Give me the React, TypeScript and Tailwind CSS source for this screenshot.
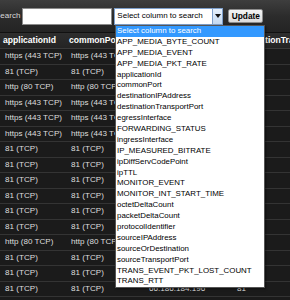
import React from 'react';

const columns = ['applicationId', 'commonPort', 'destinationIPAddress', 'destinationTransportPort'];

const rows: string[][] = [
  ['https (443 TCP)', 'https (443 TCP)', '74.125.224.18', '443'],
  ['81 (TCP)', '81 (TCP)', '66.186.184.196', '81'],
  ['http (80 TCP)', 'http (80 TCP)', '72.21.91.19', '80'],
  ['https (443 TCP)', 'https (443 TCP)', '74.125.224.18', '443'],
  ['https (443 TCP)', 'https (443 TCP)', '74.125.224.18', '443'],
  ['https (443 TCP)', 'https (443 TCP)', '74.125.224.18', '443'],
  ['81 (TCP)', '81 (TCP)', '66.186.184.196', '81'],
  ['81 (TCP)', '81 (TCP)', '66.186.184.196', '81'],
  ['81 (TCP)', '81 (TCP)', '66.186.184.196', '81'],
  ['81 (TCP)', '81 (TCP)', '66.186.184.196', '81'],
  ['81 (TCP)', '81 (TCP)', '66.186.184.196', '81'],
  ['81 (TCP)', '81 (TCP)', '66.186.184.196', '81'],
  ['http (80 TCP)', 'http (80 TCP)', '72.21.91.19', '80'],
  ['81 (TCP)', '81 (TCP)', '66.186.184.196', '81'],
  ['81 (TCP)', '81 (TCP)', '66.186.184.196', '81'],
  ['81 (TCP)', '81 (TCP)', '66.186.184.196', '81'],
];

const options = [
  'Select column to search',
  'APP_MEDIA_BYTE_COUNT',
  'APP_MEDIA_EVENT',
  'APP_MEDIA_PKT_RATE',
  'applicationId',
  'commonPort',
  'destinationIPAddress',
  'destinationTransportPort',
  'egressInterface',
  'FORWARDING_STATUS',
  'ingressInterface',
  'IP_MEASURED_BITRATE',
  'ipDiffServCodePoint',
  'ipTTL',
  'MONITOR_EVENT',
  'MONITOR_INT_START_TIME',
  'octetDeltaCount',
  'packetDeltaCount',
  'protocolIdentifier',
  'sourceIPAddress',
  'sourceOrDestination',
  'sourceTransportPort',
  'TRANS_EVENT_PKT_LOST_COUNT',
  'TRANS_RTT',
];

const widths = ['w-[66px]', 'w-[78px]', 'w-[88px]', 'w-[80px]'];

export default function App() {
  return (
    <div
      className="relative w-[290px] h-[300px] overflow-hidden bg-[#1b1b1b]"
      style={{ fontFamily: '"Liberation Sans", Arial, sans-serif' }}
    >
      {/* search bar */}
      <div className="flex items-center h-[33px] bg-gradient-to-b from-[#3e3e3e] via-[#2c2c2c] to-[#242424] border-b border-[#111]">
        <span className="ml-[-5px] text-[8px] text-[#d8d8d8]">Search</span>
        <div className="ml-[2px] w-[90px] h-[17px] bg-white border border-[#8a8a8a]" />
        <div className="ml-[2px] flex items-center w-[109px] h-[17px] bg-white border border-[#7ea0cc]">
          <span className="flex-1 pl-[2px] text-[8px] text-black whitespace-nowrap">Select column to search</span>
          <div className="flex items-center justify-center w-[10px] h-full bg-gradient-to-b from-[#e6f0fb] to-[#c4d9f1] border-l border-[#7ea0cc]">
            <svg width="6" height="4" viewBox="0 0 6 4">
              <path d="M0 0 L6 0 L3 4 Z" fill="#111" />
            </svg>
          </div>
        </div>
        <button className="ml-[5px] w-[35px] h-[14px] bg-gradient-to-b from-[#f4f4f4] to-[#dcdcdc] border border-[#8c8c8c] rounded-[2px] text-[8.3px] font-bold text-black leading-none">
          Update
        </button>
      </div>

      {/* table header */}
      <div className="flex items-center h-[16px] bg-gradient-to-b from-[#2e2e2e] to-[#242424] border-b border-[#3a3a3a]">
        {columns.map((c, i) => (
          <div key={c} className={`${widths[i]} shrink-0 pl-[3px] text-[8.6px] font-bold text-white whitespace-nowrap overflow-hidden`}>
            {c}
          </div>
        ))}
      </div>

      {/* table rows */}
      {rows.map((r, ri) => (
        <div key={ri} className="flex items-center h-[15.5px] border-b border-[#343434] bg-[#1b1b1b]">
          {r.map((v, i) => (
            <div key={i} className={`${widths[i]} shrink-0 pl-[5px] text-[8.1px] text-[#dedede] whitespace-nowrap overflow-hidden`}>
              {v}
            </div>
          ))}
        </div>
      ))}

      {/* open select list */}
      <div className="absolute left-[115px] top-[25px] w-[150px] bg-white border border-[#555] shadow-[1px_1px_2px_rgba(0,0,0,0.5)]">
        {options.map((o, i) => (
          <div
            key={o}
            className={`h-[10.9px] pl-[1px] text-[7.9px] leading-[10.9px] whitespace-nowrap ${
              i === 0 ? 'bg-[#3399ff] text-white' : 'text-black'
            }`}
          >
            {o}
          </div>
        ))}
      </div>
    </div>
  );
}
